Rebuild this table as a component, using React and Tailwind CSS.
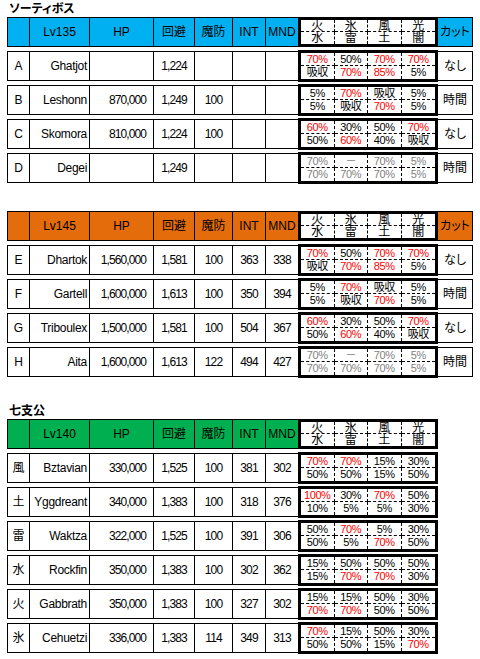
import clsx from 'clsx';

const FONT = "font-['Liberation_Sans','Noto_Sans_CJK_JP',sans-serif]";

const HEAD_ELEMS = ['火', '氷', '風', '光', '水', '雷', '土', '闇'];

const sections = [
  {
    title: 'ソーティボス',
    level: 'Lv135',
    color: 'bg-[#00b0f0]',
    cut: true,
    rows: [
      { id: 'A', name: 'Ghatjot', hp: '', eva: '1,224', mdef: '', int: '', mnd: '', cut: 'なし',
        elems: ['!70%', '50%', '!70%', '!70%', '吸収', '!70%', '!85%', '5%'] },
      { id: 'B', name: 'Leshonn', hp: '870,000', eva: '1,249', mdef: '100', int: '', mnd: '', cut: '時間',
        elems: ['5%', '!70%', '吸収', '5%', '5%', '吸収', '!70%', '5%'] },
      { id: 'C', name: 'Skomora', hp: '810,000', eva: '1,224', mdef: '100', int: '', mnd: '', cut: 'なし',
        elems: ['!60%', '30%', '50%', '!70%', '50%', '!60%', '40%', '吸収'] },
      { id: 'D', name: 'Degei', hp: '', eva: '1,249', mdef: '', int: '', mnd: '', cut: '時間', gray: true,
        elems: ['70%', '－', '70%', '5%', '70%', '70%', '70%', '5%'] },
    ],
  },
  {
    title: null,
    level: 'Lv145',
    color: 'bg-[#e46c0a]',
    cut: true,
    rows: [
      { id: 'E', name: 'Dhartok', hp: '1,560,000', eva: '1,581', mdef: '100', int: '363', mnd: '338', cut: 'なし',
        elems: ['!70%', '50%', '!70%', '!70%', '吸収', '!70%', '!85%', '5%'] },
      { id: 'F', name: 'Gartell', hp: '1,600,000', eva: '1,613', mdef: '100', int: '350', mnd: '394', cut: '時間',
        elems: ['5%', '!70%', '吸収', '5%', '5%', '吸収', '!70%', '5%'] },
      { id: 'G', name: 'Triboulex', hp: '1,500,000', eva: '1,581', mdef: '100', int: '504', mnd: '367', cut: 'なし',
        elems: ['!60%', '30%', '50%', '!70%', '50%', '!60%', '40%', '吸収'] },
      { id: 'H', name: 'Aita', hp: '1,600,000', eva: '1,613', mdef: '122', int: '494', mnd: '427', cut: '時間', gray: true,
        elems: ['70%', '－', '70%', '5%', '70%', '70%', '70%', '5%'] },
    ],
  },
  {
    title: '七支公',
    level: 'Lv140',
    color: 'bg-[#00b050]',
    cut: false,
    rows: [
      { id: '風', name: 'Bztavian', hp: '330,000', eva: '1,525', mdef: '100', int: '381', mnd: '302',
        elems: ['!70%', '!70%', '15%', '30%', '50%', '50%', '15%', '50%'] },
      { id: '土', name: 'Yggdreant', hp: '340,000', eva: '1,383', mdef: '100', int: '318', mnd: '376',
        elems: ['!100%', '30%', '!70%', '50%', '10%', '5%', '5%', '30%'] },
      { id: '雷', name: 'Waktza', hp: '322,000', eva: '1,525', mdef: '100', int: '391', mnd: '306',
        elems: ['50%', '!70%', '5%', '30%', '50%', '5%', '!70%', '50%'] },
      { id: '水', name: 'Rockfin', hp: '350,000', eva: '1,383', mdef: '100', int: '302', mnd: '362',
        elems: ['15%', '50%', '50%', '50%', '15%', '!70%', '!70%', '30%'] },
      { id: '火', name: 'Gabbrath', hp: '350,000', eva: '1,383', mdef: '100', int: '327', mnd: '302',
        elems: ['15%', '15%', '50%', '30%', '!70%', '!70%', '50%', '50%'] },
      { id: '氷', name: 'Cehuetzi', hp: '336,000', eva: '1,383', mdef: '114', int: '349', mnd: '313',
        elems: ['!70%', '15%', '50%', '30%', '50%', '50%', '15%', '!70%'] },
    ],
  },
];

function ElemBox({ cells, gray, header }) {
  return (
    <div
      className={clsx(
        'w-[140px] shrink-0 border-[3px] border-black bg-white grid grid-cols-4 grid-rows-2',
        header ? 'h-[30px] text-[12px]' : '-my-px h-[32px] text-[11px] tracking-[-0.4px]'
      )}
    >
      {cells.map((c, i) => {
        const red = c.startsWith('!');
        const text = red ? c.slice(1) : c;
        return (
          <div
            key={i}
            className={clsx(
              'flex items-center justify-center leading-none border-dashed border-black',
              i < 4 && 'border-b',
              i % 4 !== 3 && 'border-r',
              red ? 'text-[#ff0000]' : gray ? 'text-[#7f7f7f]' : 'text-black'
            )}
          >
            {text}
          </div>
        );
      })}
    </div>
  );
}

function Row({ cells, bg, elems, gray, header, cut, showCut }) {
  const cell = clsx('flex items-center border-y border-black', bg);
  // numbers in the sheet are narrow, tighten them a bit
  const num = header ? '' : 'tracking-[-0.9px]';
  return (
    <div className="flex h-[30px] text-[12px] leading-none">
      <div className={clsx(cell, 'w-[23px] border-x justify-center')}>{cells[0]}</div>
      <div className={clsx(cell, 'w-[60px] border-r', header ? 'justify-center' : 'justify-end pr-[2px] tracking-[-0.3px]')}>{cells[1]}</div>
      <div className={clsx(cell, num, 'w-[64px] border-r', header ? 'justify-center' : 'justify-end pr-[7px]')}>{cells[2]}</div>
      <div className={clsx(cell, num, 'w-[41px] border-r justify-center')}>{cells[3]}</div>
      <div className={clsx(cell, num, 'w-[38px] border-r justify-center')}>{cells[4]}</div>
      <div className={clsx(cell, num, 'w-[33px] border-r justify-center')}>{cells[5]}</div>
      <div className={clsx(cell, num, 'w-[32px] justify-center')}>{cells[6]}</div>
      <ElemBox cells={elems} gray={gray} header={header} />
      {showCut && (
        <div className={clsx(cell, 'w-[35px] border-r justify-center')}>{cut}</div>
      )}
    </div>
  );
}

function Section({ section, className }) {
  return (
    <div className={className}>
      {section.title && (
        <div className="h-[17px] pl-[2px] pt-[3px] text-[12px] font-bold leading-none">{section.title}</div>
      )}
      <Row
        header
        bg={section.color}
        cells={['', section.level, 'HP', '回避', '魔防', 'INT', 'MND']}
        elems={HEAD_ELEMS}
        cut="カット"
        showCut={section.cut}
      />
      {section.rows.map((r) => (
        <div key={r.id} className="mt-[4px]">
          <Row
            bg="bg-white"
            cells={[r.id, r.name, r.hp, r.eva, r.mdef, r.int, r.mnd]}
            elems={r.elems}
            gray={r.gray}
            cut={r.cut}
            showCut={section.cut}
          />
        </div>
      ))}
    </div>
  );
}

export default function App() {
  return (
    <div className={clsx('w-[480px] h-[659px] bg-white text-black pl-[7px] [font-feature-settings:"palt"]', FONT)}>
      <Section section={sections[0]} />
      <Section section={sections[1]} className="mt-[28px]" />
      <Section section={sections[2]} className="mt-[25px]" />
    </div>
  );
}
